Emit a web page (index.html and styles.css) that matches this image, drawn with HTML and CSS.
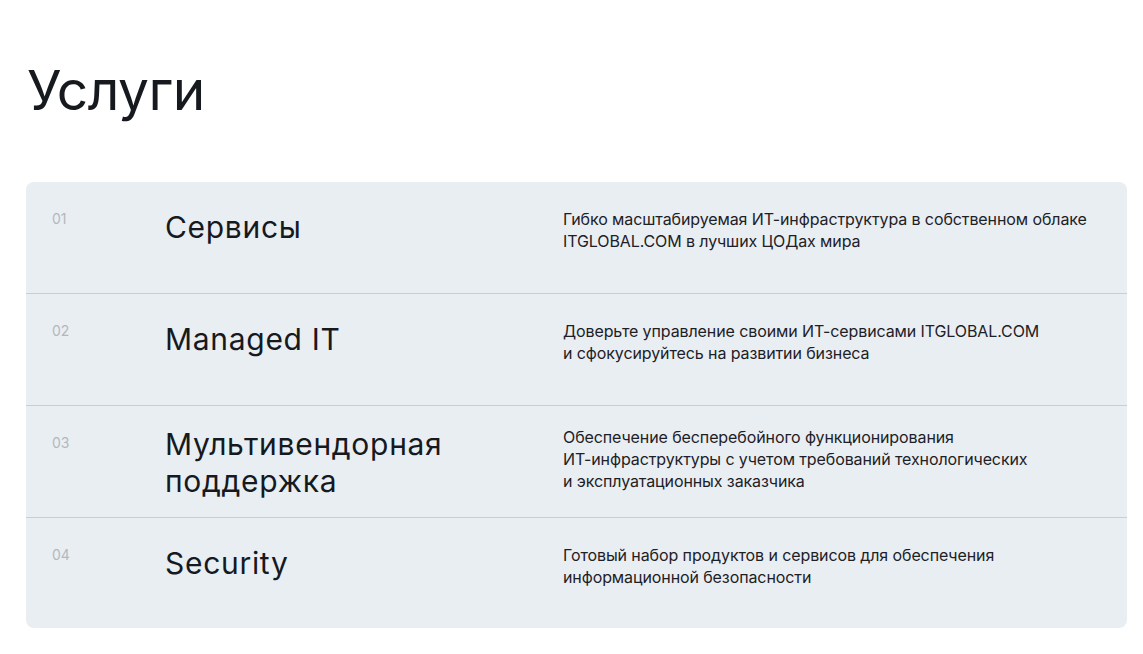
FILE: index.html
```html
<!DOCTYPE html>
<html lang="ru">
<head>
<meta charset="utf-8">
<link rel="stylesheet" href="styles.css">
</head>
<body>
<main class="page">
  <h1 class="title">Услуги</h1>
  <div class="card">
    <div class="row">
      <div class="num">01</div>
      <div class="name">Сервисы</div>
      <div class="desc">Гибко масштабируемая ИТ-инфраструктура в собственном облаке<br>ITGLOBAL.COM в лучших ЦОДах мира</div>
    </div>
    <div class="row">
      <div class="num">02</div>
      <div class="name">Managed IT</div>
      <div class="desc">Доверьте управление своими ИТ-сервисами ITGLOBAL.COM<br>и сфокусируйтесь на развитии бизнеса</div>
    </div>
    <div class="row row-tall">
      <div class="num">03</div>
      <div class="name">Мультивендорная<br>поддержка</div>
      <div class="desc">Обеспечение бесперебойного функционирования<br>ИТ-инфраструктуры с учетом требований технологических<br>и эксплуатационных заказчика</div>
    </div>
    <div class="row">
      <div class="num">04</div>
      <div class="name">Security</div>
      <div class="desc">Готовый набор продуктов и сервисов для обеспечения<br>информационной безопасности</div>
    </div>
  </div>
</main>
</body>
</html>
```

FILE: styles.css
```css
* { box-sizing: border-box; }
html, body { margin: 0; padding: 0; background: #ffffff; }
body {
  font-family: Inter, "Noto Sans", "Liberation Sans", sans-serif;
  color: #16191d;
}
.page {
  padding: 56px 16px 0 26px;
}
.title {
  margin: 0 0 58px 1px;
  font-size: 55px;
  font-weight: 400;
  line-height: 68px;
  letter-spacing: -0.5px;
}
.card {
  background: #e9eef3;
  border-radius: 8px;
  width: 1101px;
}
.row {
  display: grid;
  grid-template-columns: 113px 398px 1fr;
  padding: 26px 26px 0 26px;
  height: 112px;
  border-top: 1px solid #c9ced3;
}
.row:first-child { border-top: none; height: 111px; }
.row:last-child { height: 111px; }
.num {
  font-size: 14px;
  line-height: 22px;
  color: #b3b8bd;
}
.name {
  font-size: 30px;
  line-height: 37px;
  margin-top: 1px;
  letter-spacing: 0.7px;
}
.desc {
  font-size: 16px;
  line-height: 22px;
  letter-spacing: -0.1px;
  color: #1d2126;
}
.row-tall .name { margin-top: -6px; }
.row-tall .desc { margin-top: -6px; }
```
